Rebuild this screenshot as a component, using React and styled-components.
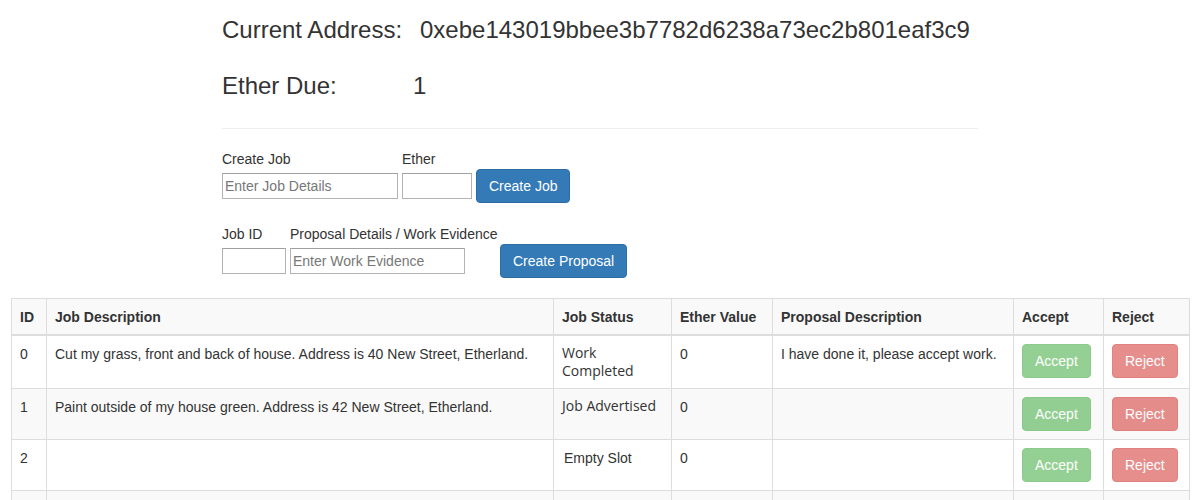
import React from 'react';
import styled, {createGlobalStyle} from 'styled-components';

const GlobalStyle = createGlobalStyle`
  body {
    margin: 0;
    font-family: "Liberation Sans", Arial, sans-serif;
    font-size: 14px;
    line-height: 20px;
    color: #333;
    background: #fff;
  }
  * { box-sizing: border-box; }
`;

const Top = styled.div`
  margin-left: 222px;
  width: 756px;
  padding-top: 16px;
`;

const InfoLine = styled.div`
  display: flex;
  font-size: 24px;
  line-height: 27px;
  margin-bottom: 29px;
  color: #333;
`;

const InfoLabel = styled.span`
  width: ${props => props.width}px;
  flex-shrink: 0;
`;

const Rule = styled.hr`
  margin: 0 0 20px 0;
  border: 0;
  border-top: 1px solid #eee;
`;

const FormGrid = styled.div`
  display: grid;
  grid-template-columns: ${props => props.columns};
  grid-template-rows: 20px 34px;
  align-items: center;
  column-gap: 4px;
  margin-bottom: ${props => props.gap}px;
`;

const Label = styled.label`
  font-size: 14px;
  line-height: 20px;
  white-space: nowrap;
`;

const Input = styled.input`
  height: 26px;
  width: 100%;
  border: 1px solid #b3b3b3;
  border-top-color: #a0a0a0;
  padding: 0 2px;
  font-family: "Liberation Sans", Arial, sans-serif;
  font-size: 14px;
  color: #333;
  &::placeholder { color: #777; }
`;

const PrimaryButton = styled.button`
  height: 34px;
  padding: 6px 12px;
  margin-left: ${props => props.offset || 0}px;
  background: #337ab7;
  border: 1px solid #2e6da4;
  border-radius: 4px;
  color: #fff;
  font-family: "Liberation Sans", Arial, sans-serif;
  font-size: 14px;
  line-height: 20px;
  white-space: nowrap;
  justify-self: start;
`;

const TableWrap = styled.div`
  padding: 0 11px;
`;

const Table = styled.table`
  width: 1178px;
  table-layout: fixed;
  border-collapse: collapse;
  border: 1px solid #ddd;
`;

const Th = styled.th`
  text-align: left;
  font-weight: bold;
  padding: 8px 8px 7px;
  line-height: 20px;
  border: 1px solid #ddd;
  border-bottom-width: 2px;
  white-space: nowrap;
`;

const Tr = styled.tr`
  background: ${props => (props.striped ? '#f9f9f9' : '#fff')};
`;

const Td = styled.td`
  padding: 8px;
  height: 50px;
  line-height: 20px;
  vertical-align: top;
  border: 1px solid #ddd;
`;

const StatusText = styled.span`
  display: block;
  font-family: ${props => (props.plain ? '"Liberation Sans", Arial' : '"Open Sans"')}, sans-serif;
  line-height: ${props => (props.plain ? '20px' : '18px')};
  padding-left: ${props => (props.plain ? 2 : 0)}px;
`;

const ActionButton = styled.button`
  display: block;
  height: 34px;
  padding: 6px 12px;
  border-radius: 4px;
  border: 1px solid ${props => (props.kind === 'accept' ? '#4cae4c' : '#d43f3a')};
  background: ${props => (props.kind === 'accept' ? '#5cb85c' : '#d9534f')};
  opacity: 0.65;
  color: #fff;
  font-family: "Liberation Sans", Arial, sans-serif;
  font-size: 14px;
  line-height: 20px;
`;

const columns = [
  {name: 'ID', width: 35},
  {name: 'Job Description', width: 507},
  {name: 'Job Status', width: 118},
  {name: 'Ether Value', width: 101},
  {name: 'Proposal Description', width: 241},
  {name: 'Accept', width: 90},
  {name: 'Reject', width: 86},
];

const jobs = [
  {id: 0, description: 'Cut my grass, front and back of house. Address is 40 New Street, Etherland.', status: 'Work Completed', value: 0, proposal: 'I have done it, please accept work.'},
  {id: 1, description: 'Paint outside of my house green. Address is 42 New Street, Etherland.', status: 'Job Advertised', value: 0, proposal: ''},
  {id: 2, description: '', status: 'Empty Slot', value: 0, proposal: '', plain: true},
];

const App = () => {
  return (
    <>
      <GlobalStyle />
      <Top>
        <InfoLine>
          <InfoLabel width={198}>Current Address:</InfoLabel>
          <span>0xebe143019bbee3b7782d6238a73ec2b801eaf3c9</span>
        </InfoLine>
        <InfoLine>
          <InfoLabel width={191}>Ether Due:</InfoLabel>
          <span>1</span>
        </InfoLine>
        <Rule />
        <FormGrid columns="176px 70px auto" gap={21}>
          <Label>Create Job</Label>
          <Label>Ether</Label>
          <span />
          <Input placeholder="Enter Job Details" />
          <Input />
          <PrimaryButton>Create Job</PrimaryButton>
        </FormGrid>
        <FormGrid columns="64px 175px auto" gap={20}>
          <Label>Job ID</Label>
          <Label>Proposal Details / Work Evidence</Label>
          <span />
          <Input />
          <Input placeholder="Enter Work Evidence" />
          <PrimaryButton offset={31}>Create Proposal</PrimaryButton>
        </FormGrid>
      </Top>
      <TableWrap>
        <Table>
          <colgroup>
            {columns.map(c => <col key={c.name} style={{width: c.width}} />)}
          </colgroup>
          <thead>
            <Tr striped>
              {columns.map(c => <Th key={c.name}>{c.name}</Th>)}
            </Tr>
          </thead>
          <tbody>
            {jobs.map(job => (
              <Tr key={job.id} striped={job.id % 2 === 1}>
                <Td>{job.id}</Td>
                <Td>{job.description}</Td>
                <Td><StatusText plain={job.plain}>{job.status}</StatusText></Td>
                <Td>{job.value}</Td>
                <Td>{job.proposal}</Td>
                <Td><ActionButton kind="accept">Accept</ActionButton></Td>
                <Td><ActionButton kind="reject">Reject</ActionButton></Td>
              </Tr>
            ))}
            <Tr striped>
              {columns.map(c => <Td key={c.name} />)}
            </Tr>
          </tbody>
        </Table>
      </TableWrap>
    </>
  );
};

export default App;
